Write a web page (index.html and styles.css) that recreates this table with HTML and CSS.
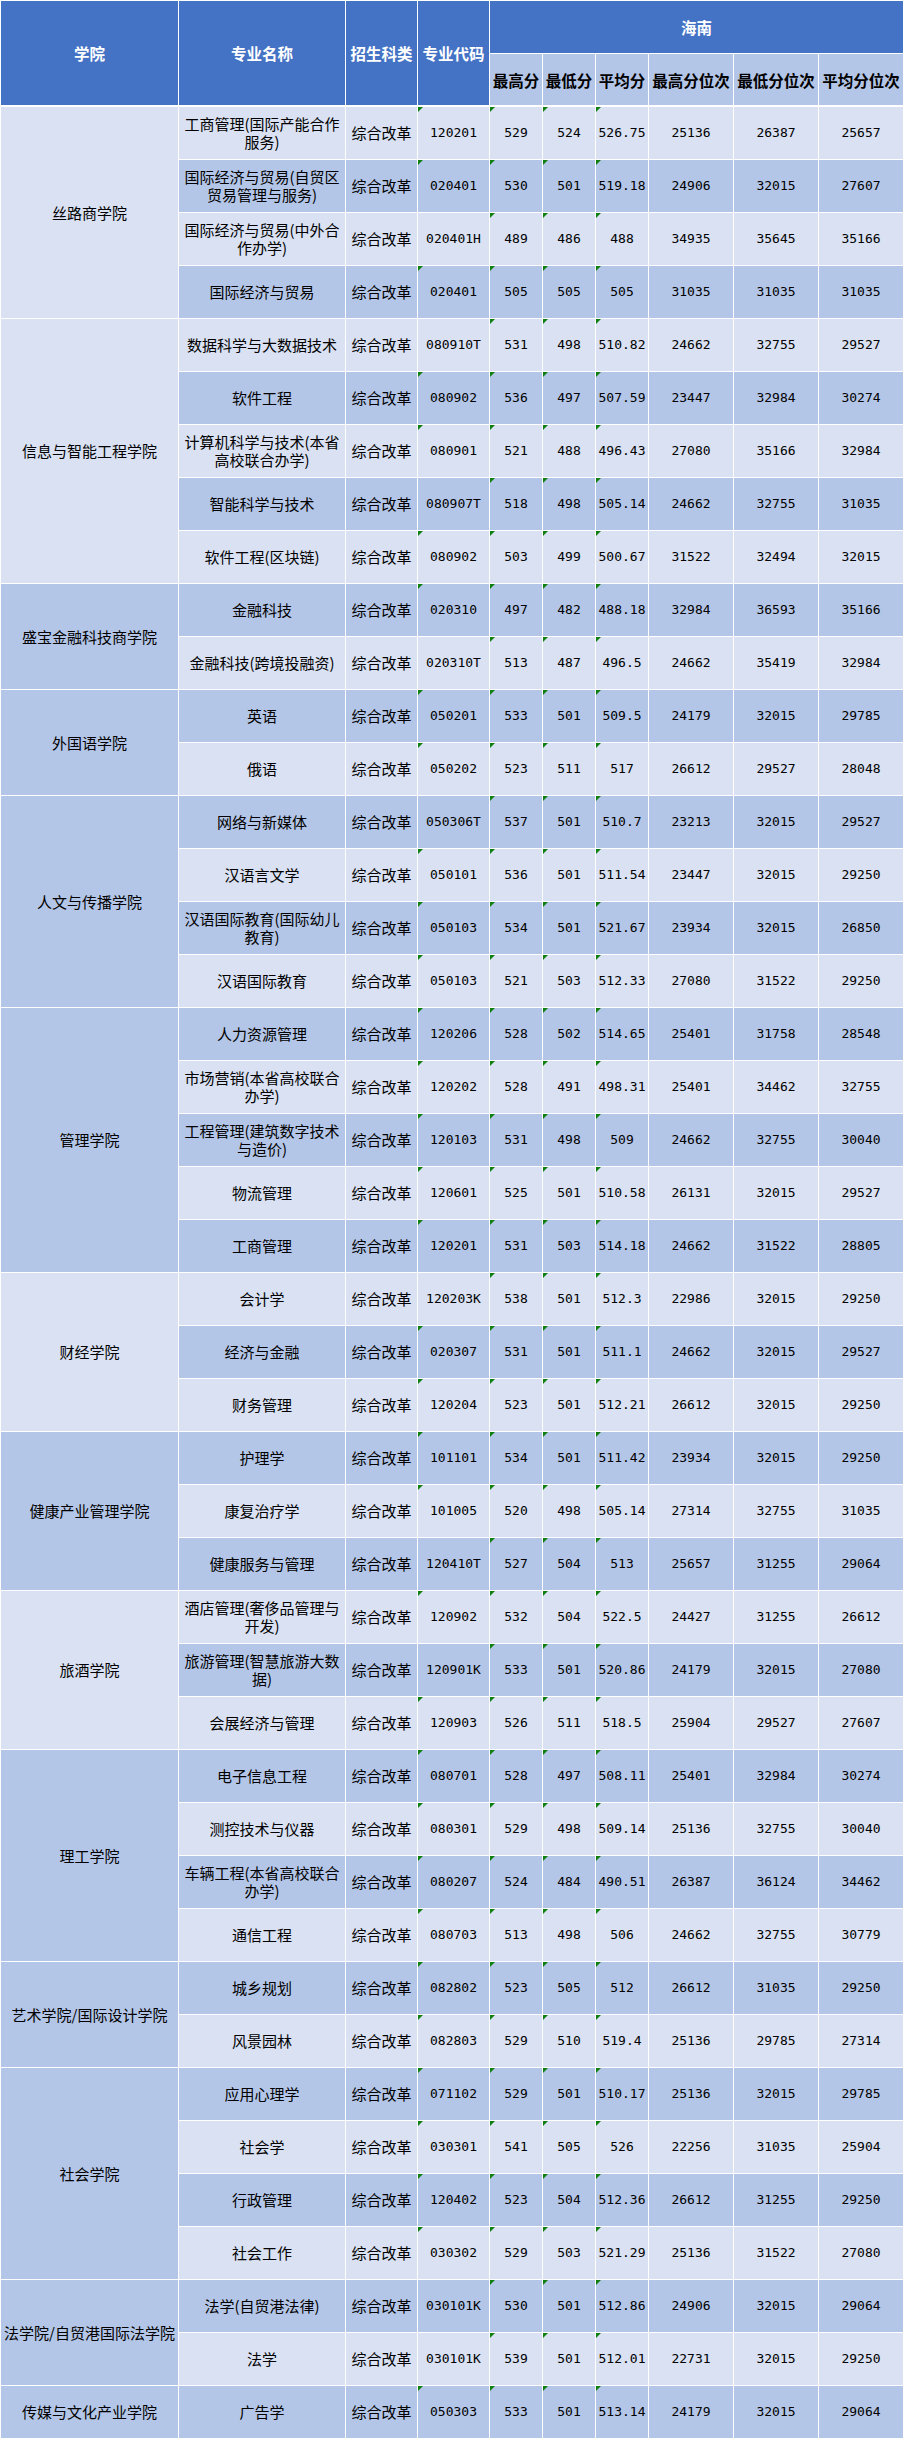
FILE: index.html
```html
<!DOCTYPE html>
<html lang="zh-CN">
<head>
<meta charset="utf-8">
<title>海南招生分数</title>
<link rel="stylesheet" href="styles.css">
</head>
<body>
<div class="sheet">
  <div class="h hs">学院</div>
  <div class="h hs">专业名称</div>
  <div class="h hs">招生科类</div>
  <div class="h hs">专业代码</div>
  <div class="h hp">海南</div>
  <div class="sh">最高分</div>
  <div class="sh">最低分</div>
  <div class="sh">平均分</div>
  <div class="sh">最高分位次</div>
  <div class="sh">最低分位次</div>
  <div class="sh">平均分位次</div>

  <div class="r"><div class="col lt g4">丝路商学院</div><div class="nm">工商管理(国际产能合作<br>服务)</div><div class="ty">综合改革</div><div class="cd t">120201</div><div class="n t">529</div><div class="n t">524</div><div class="n t">526.75</div><div class="n">25136</div><div class="n">26387</div><div class="n">25657</div></div>
  <div class="r d"><div class="nm">国际经济与贸易(自贸区<br>贸易管理与服务)</div><div class="ty">综合改革</div><div class="cd t">020401</div><div class="n t">530</div><div class="n t">501</div><div class="n t">519.18</div><div class="n">24906</div><div class="n">32015</div><div class="n">27607</div></div>
  <div class="r"><div class="nm">国际经济与贸易(中外合<br>作办学)</div><div class="ty">综合改革</div><div class="cd">020401H</div><div class="n t">489</div><div class="n t">486</div><div class="n t">488</div><div class="n">34935</div><div class="n">35645</div><div class="n">35166</div></div>
  <div class="r d"><div class="nm">国际经济与贸易</div><div class="ty">综合改革</div><div class="cd t">020401</div><div class="n t">505</div><div class="n t">505</div><div class="n t">505</div><div class="n">31035</div><div class="n">31035</div><div class="n">31035</div></div>

  <div class="r"><div class="col lt g5">信息与智能工程学院</div><div class="nm">数据科学与大数据技术</div><div class="ty">综合改革</div><div class="cd">080910T</div><div class="n t">531</div><div class="n t">498</div><div class="n t">510.82</div><div class="n">24662</div><div class="n">32755</div><div class="n">29527</div></div>
  <div class="r d"><div class="nm">软件工程</div><div class="ty">综合改革</div><div class="cd t">080902</div><div class="n t">536</div><div class="n t">497</div><div class="n t">507.59</div><div class="n">23447</div><div class="n">32984</div><div class="n">30274</div></div>
  <div class="r"><div class="nm">计算机科学与技术(本省<br>高校联合办学)</div><div class="ty">综合改革</div><div class="cd t">080901</div><div class="n t">521</div><div class="n t">488</div><div class="n t">496.43</div><div class="n">27080</div><div class="n">35166</div><div class="n">32984</div></div>
  <div class="r d"><div class="nm">智能科学与技术</div><div class="ty">综合改革</div><div class="cd">080907T</div><div class="n t">518</div><div class="n t">498</div><div class="n t">505.14</div><div class="n">24662</div><div class="n">32755</div><div class="n">31035</div></div>
  <div class="r"><div class="nm">软件工程(区块链)</div><div class="ty">综合改革</div><div class="cd t">080902</div><div class="n t">503</div><div class="n t">499</div><div class="n t">500.67</div><div class="n">31522</div><div class="n">32494</div><div class="n">32015</div></div>

  <div class="r d"><div class="col g2">盛宝金融科技商学院</div><div class="nm">金融科技</div><div class="ty">综合改革</div><div class="cd t">020310</div><div class="n t">497</div><div class="n t">482</div><div class="n t">488.18</div><div class="n">32984</div><div class="n">36593</div><div class="n">35166</div></div>
  <div class="r"><div class="nm">金融科技(跨境投融资)</div><div class="ty">综合改革</div><div class="cd">020310T</div><div class="n t">513</div><div class="n t">487</div><div class="n t">496.5</div><div class="n">24662</div><div class="n">35419</div><div class="n">32984</div></div>

  <div class="r d"><div class="col g2">外国语学院</div><div class="nm">英语</div><div class="ty">综合改革</div><div class="cd t">050201</div><div class="n t">533</div><div class="n t">501</div><div class="n t">509.5</div><div class="n">24179</div><div class="n">32015</div><div class="n">29785</div></div>
  <div class="r"><div class="nm">俄语</div><div class="ty">综合改革</div><div class="cd t">050202</div><div class="n t">523</div><div class="n t">511</div><div class="n t">517</div><div class="n">26612</div><div class="n">29527</div><div class="n">28048</div></div>

  <div class="r d"><div class="col g4">人文与传播学院</div><div class="nm">网络与新媒体</div><div class="ty">综合改革</div><div class="cd">050306T</div><div class="n t">537</div><div class="n t">501</div><div class="n t">510.7</div><div class="n">23213</div><div class="n">32015</div><div class="n">29527</div></div>
  <div class="r"><div class="nm">汉语言文学</div><div class="ty">综合改革</div><div class="cd t">050101</div><div class="n t">536</div><div class="n t">501</div><div class="n t">511.54</div><div class="n">23447</div><div class="n">32015</div><div class="n">29250</div></div>
  <div class="r d"><div class="nm">汉语国际教育(国际幼儿<br>教育)</div><div class="ty">综合改革</div><div class="cd t">050103</div><div class="n t">534</div><div class="n t">501</div><div class="n t">521.67</div><div class="n">23934</div><div class="n">32015</div><div class="n">26850</div></div>
  <div class="r"><div class="nm">汉语国际教育</div><div class="ty">综合改革</div><div class="cd t">050103</div><div class="n t">521</div><div class="n t">503</div><div class="n t">512.33</div><div class="n">27080</div><div class="n">31522</div><div class="n">29250</div></div>

  <div class="r d"><div class="col g5">管理学院</div><div class="nm">人力资源管理</div><div class="ty">综合改革</div><div class="cd t">120206</div><div class="n t">528</div><div class="n t">502</div><div class="n t">514.65</div><div class="n">25401</div><div class="n">31758</div><div class="n">28548</div></div>
  <div class="r"><div class="nm">市场营销(本省高校联合<br>办学)</div><div class="ty">综合改革</div><div class="cd t">120202</div><div class="n t">528</div><div class="n t">491</div><div class="n t">498.31</div><div class="n">25401</div><div class="n">34462</div><div class="n">32755</div></div>
  <div class="r d"><div class="nm">工程管理(建筑数字技术<br>与造价)</div><div class="ty">综合改革</div><div class="cd t">120103</div><div class="n t">531</div><div class="n t">498</div><div class="n t">509</div><div class="n">24662</div><div class="n">32755</div><div class="n">30040</div></div>
  <div class="r"><div class="nm">物流管理</div><div class="ty">综合改革</div><div class="cd t">120601</div><div class="n t">525</div><div class="n t">501</div><div class="n t">510.58</div><div class="n">26131</div><div class="n">32015</div><div class="n">29527</div></div>
  <div class="r d"><div class="nm">工商管理</div><div class="ty">综合改革</div><div class="cd t">120201</div><div class="n t">531</div><div class="n t">503</div><div class="n t">514.18</div><div class="n">24662</div><div class="n">31522</div><div class="n">28805</div></div>

  <div class="r"><div class="col lt g3">财经学院</div><div class="nm">会计学</div><div class="ty">综合改革</div><div class="cd">120203K</div><div class="n t">538</div><div class="n t">501</div><div class="n t">512.3</div><div class="n">22986</div><div class="n">32015</div><div class="n">29250</div></div>
  <div class="r d"><div class="nm">经济与金融</div><div class="ty">综合改革</div><div class="cd t">020307</div><div class="n t">531</div><div class="n t">501</div><div class="n t">511.1</div><div class="n">24662</div><div class="n">32015</div><div class="n">29527</div></div>
  <div class="r"><div class="nm">财务管理</div><div class="ty">综合改革</div><div class="cd t">120204</div><div class="n t">523</div><div class="n t">501</div><div class="n t">512.21</div><div class="n">26612</div><div class="n">32015</div><div class="n">29250</div></div>

  <div class="r d"><div class="col g3">健康产业管理学院</div><div class="nm">护理学</div><div class="ty">综合改革</div><div class="cd t">101101</div><div class="n t">534</div><div class="n t">501</div><div class="n t">511.42</div><div class="n">23934</div><div class="n">32015</div><div class="n">29250</div></div>
  <div class="r"><div class="nm">康复治疗学</div><div class="ty">综合改革</div><div class="cd t">101005</div><div class="n t">520</div><div class="n t">498</div><div class="n t">505.14</div><div class="n">27314</div><div class="n">32755</div><div class="n">31035</div></div>
  <div class="r d"><div class="nm">健康服务与管理</div><div class="ty">综合改革</div><div class="cd">120410T</div><div class="n t">527</div><div class="n t">504</div><div class="n t">513</div><div class="n">25657</div><div class="n">31255</div><div class="n">29064</div></div>

  <div class="r"><div class="col lt g3">旅酒学院</div><div class="nm">酒店管理(奢侈品管理与<br>开发)</div><div class="ty">综合改革</div><div class="cd t">120902</div><div class="n t">532</div><div class="n t">504</div><div class="n t">522.5</div><div class="n">24427</div><div class="n">31255</div><div class="n">26612</div></div>
  <div class="r d"><div class="nm">旅游管理(智慧旅游大数<br>据)</div><div class="ty">综合改革</div><div class="cd">120901K</div><div class="n t">533</div><div class="n t">501</div><div class="n t">520.86</div><div class="n">24179</div><div class="n">32015</div><div class="n">27080</div></div>
  <div class="r"><div class="nm">会展经济与管理</div><div class="ty">综合改革</div><div class="cd t">120903</div><div class="n t">526</div><div class="n t">511</div><div class="n t">518.5</div><div class="n">25904</div><div class="n">29527</div><div class="n">27607</div></div>

  <div class="r d"><div class="col g4">理工学院</div><div class="nm">电子信息工程</div><div class="ty">综合改革</div><div class="cd t">080701</div><div class="n t">528</div><div class="n t">497</div><div class="n t">508.11</div><div class="n">25401</div><div class="n">32984</div><div class="n">30274</div></div>
  <div class="r"><div class="nm">测控技术与仪器</div><div class="ty">综合改革</div><div class="cd t">080301</div><div class="n t">529</div><div class="n t">498</div><div class="n t">509.14</div><div class="n">25136</div><div class="n">32755</div><div class="n">30040</div></div>
  <div class="r d"><div class="nm">车辆工程(本省高校联合<br>办学)</div><div class="ty">综合改革</div><div class="cd t">080207</div><div class="n t">524</div><div class="n t">484</div><div class="n t">490.51</div><div class="n">26387</div><div class="n">36124</div><div class="n">34462</div></div>
  <div class="r"><div class="nm">通信工程</div><div class="ty">综合改革</div><div class="cd t">080703</div><div class="n t">513</div><div class="n t">498</div><div class="n t">506</div><div class="n">24662</div><div class="n">32755</div><div class="n">30779</div></div>

  <div class="r d"><div class="col g2">艺术学院/国际设计学院</div><div class="nm">城乡规划</div><div class="ty">综合改革</div><div class="cd t">082802</div><div class="n t">523</div><div class="n t">505</div><div class="n t">512</div><div class="n">26612</div><div class="n">31035</div><div class="n">29250</div></div>
  <div class="r"><div class="nm">风景园林</div><div class="ty">综合改革</div><div class="cd t">082803</div><div class="n t">529</div><div class="n t">510</div><div class="n t">519.4</div><div class="n">25136</div><div class="n">29785</div><div class="n">27314</div></div>

  <div class="r d"><div class="col g4">社会学院</div><div class="nm">应用心理学</div><div class="ty">综合改革</div><div class="cd t">071102</div><div class="n t">529</div><div class="n t">501</div><div class="n t">510.17</div><div class="n">25136</div><div class="n">32015</div><div class="n">29785</div></div>
  <div class="r"><div class="nm">社会学</div><div class="ty">综合改革</div><div class="cd t">030301</div><div class="n t">541</div><div class="n t">505</div><div class="n t">526</div><div class="n">22256</div><div class="n">31035</div><div class="n">25904</div></div>
  <div class="r d"><div class="nm">行政管理</div><div class="ty">综合改革</div><div class="cd t">120402</div><div class="n t">523</div><div class="n t">504</div><div class="n t">512.36</div><div class="n">26612</div><div class="n">31255</div><div class="n">29250</div></div>
  <div class="r"><div class="nm">社会工作</div><div class="ty">综合改革</div><div class="cd t">030302</div><div class="n t">529</div><div class="n t">503</div><div class="n t">521.29</div><div class="n">25136</div><div class="n">31522</div><div class="n">27080</div></div>

  <div class="r d"><div class="col g2">法学院/自贸港国际法学院</div><div class="nm">法学(自贸港法律)</div><div class="ty">综合改革</div><div class="cd">030101K</div><div class="n t">530</div><div class="n t">501</div><div class="n t">512.86</div><div class="n">24906</div><div class="n">32015</div><div class="n">29064</div></div>
  <div class="r"><div class="nm">法学</div><div class="ty">综合改革</div><div class="cd">030101K</div><div class="n t">539</div><div class="n t">501</div><div class="n t">512.01</div><div class="n">22731</div><div class="n">32015</div><div class="n">29250</div></div>

  <div class="r d"><div class="col g1">传媒与文化产业学院</div><div class="nm">广告学</div><div class="ty">综合改革</div><div class="cd t">050303</div><div class="n t">533</div><div class="n t">501</div><div class="n t">513.14</div><div class="n">24179</div><div class="n">32015</div><div class="n">29064</div></div>
</div>
</body>
</html>
```

FILE: styles.css
```css
html, body {
  margin: 0;
  padding: 0;
  background: #ffffff;
}

body {
  font-family: "Noto Sans CJK SC", "Noto Sans", sans-serif;
  color: #000000;
}

.sheet {
  display: grid;
  grid-template-columns: 177px 166px 71px 71px 52px 52px 52px 84px 84px 84px;
  grid-template-rows: 52px 52px;
  grid-auto-rows: 52px;
  gap: 1px;
  padding: 1px;
  width: 904px;
  box-sizing: border-box;
  background: #ffffff;
}

/* rows only group their cells; the cells sit in the sheet grid */
.sheet > .r {
  display: contents;
}

.h,
.sh,
.r > div {
  display: flex;
  align-items: center;
  justify-content: center;
  text-align: center;
  position: relative;
  min-width: 0;
}

/* header */
.h {
  background: #4472c4;
  color: #ffffff;
  font-weight: 700;
  font-size: 15.5px;
  white-space: nowrap;
}

.hs {
  grid-row: span 2;
  margin-bottom: 1px;
}

.hp {
  grid-column: span 6;
}

.sh {
  background: #b4c6e7;
  font-weight: 700;
  font-size: 15.5px;
  white-space: nowrap;
  margin-bottom: 1px;
}

/* data rows */
.r > div {
  background: #d9e1f2;
  font-size: 15px;
  line-height: 18px;
}

.r.d > div {
  background: #b4c6e7;
}

.sheet .r > .col {
  background: #b4c6e7;
  white-space: nowrap;
}

.sheet .r > .col.lt {
  background: #d9e1f2;
}

.g1 { grid-row: span 1; }
.g2 { grid-row: span 2; }
.g3 { grid-row: span 3; }
.g4 { grid-row: span 4; }
.g5 { grid-row: span 5; }

.nm {
  padding: 0 2px;
}

.ty {
  white-space: nowrap;
}

.r > .cd,
.r > .n {
  font-family: "DejaVu Sans Mono", "Liberation Mono", monospace;
  font-size: 13px;
  white-space: nowrap;
}

/* Excel "number stored as text" indicator */
.t::before {
  content: "";
  position: absolute;
  top: 0;
  left: 0;
  width: 0;
  height: 0;
  border-top: 5px solid #0f7f12;
  border-right: 5px solid transparent;
}
```
